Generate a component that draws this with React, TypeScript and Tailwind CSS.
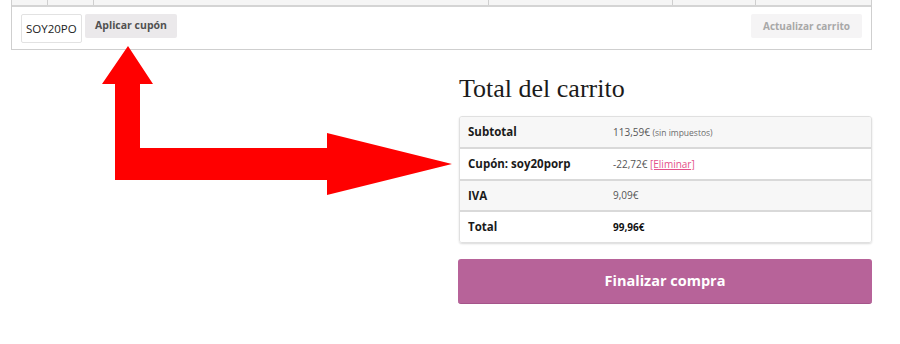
const cols = [36, 46, 395, 184, 83];

type Row = {
    label: string,
    value: React.ReactNode,
    gray: boolean,
    h: string,
}

const rows: Row[] = [
    {
        label: "Subtotal",
        value: (
            <>
                <span>113,59€</span>{" "}
                <span className="text-[8.5px] text-[#6d6d6d]">(sin impuestos)</span>
            </>
        ),
        gray: true,
        h: "h-[32px]",
    },
    {
        label: "Cupón: soy20porp",
        value: (
            <>
                <span>-22,72€</span>{" "}
                <span className="text-[#e4508a] underline">[Eliminar]</span>
            </>
        ),
        gray: false,
        h: "h-[32px]",
    },
    { label: "IVA", value: <span>9,09€</span>, gray: true, h: "h-[31px]" },
    {
        label: "Total",
        value: <span className="font-bold text-[#111]">99,96€</span>,
        gray: false,
        h: "h-[30px]",
    },
];

const Arrow = () => (
    <svg className="absolute left-0 top-0 pointer-events-none" width="900" height="344" viewBox="0 0 900 344">
        <polygon
            fill="#ff0000"
            points="128,46 153,84 140,84 140,148 327,148 327,133 452,164 327,195 327,180 115,180 115,84 102,84"
        />
    </svg>
);

const App = () => {
    return (
        <div className="relative w-[900px] h-[344px] bg-white overflow-hidden font-['Open_Sans',sans-serif]">
            {/* cart table bottom */}
            <div className="ml-[11px] w-[861px] border-x border-b border-[#cfcfcf]">
                <div className="flex h-[7px] bg-[#f5f5f5] border-b-2 border-[#d4d4d4]">
                    {cols.map((w, i) => (
                        <div key={i} style={{ width: w }} className="border-r border-[#cfcfcf] shrink-0" />
                    ))}
                    <div className="flex-1" />
                </div>
                <div className="flex items-start justify-between h-[42px] pl-[9px] pr-[9px] pt-[7px]">
                    <div className="flex items-start gap-[3px]">
                        <div className="w-[61px] h-[29px] border border-[#e2e2e2] rounded-[2px] flex items-center pl-[4px] text-[11.5px] text-[#222]">
                            SOY20PO
                        </div>
                        <button type="button" className="h-[24px] w-[92px] bg-[#ebe9eb] rounded-[2px] text-[10.5px] font-bold text-[#515151]">
                            Aplicar cupón
                        </button>
                    </div>
                    <button type="button" className="h-[24px] w-[111px] bg-[#f5f4f5] rounded-[2px] text-[10px] font-bold text-[#a8a8a8]">
                        Actualizar carrito
                    </button>
                </div>
            </div>

            {/* totals */}
            <div className="ml-[459px] w-[413px]">
                <h2 className="mt-[22px] h-[44px] text-[26px] leading-[34px] text-[#1b1b1b] font-['Liberation_Serif',serif]">
                    Total del carrito
                </h2>
                <div className="rounded-[3px] border border-[#e0e0e0] shadow-[0_1px_2px_rgba(0,0,0,0.15)] overflow-hidden">
                    {rows.map((r, i) => (
                        <div
                            key={r.label}
                            className={`flex items-center ${r.h} ${r.gray ? "bg-[#f7f7f7]" : "bg-white"} ${i < rows.length - 1 ? "border-b-2 border-[#d9d9d9]" : ""}`}
                        >
                            <div className="w-[153px] pl-[8px] text-[11.5px] font-bold text-[#1a1a1a]">{r.label}</div>
                            <div className="text-[10px] text-[#555]">{r.value}</div>
                        </div>
                    ))}
                </div>
                <button type="button" className="mt-[16px] w-[414px] -ml-px h-[45px] bg-[#b76399] border-b border-[#a4548a] rounded-[3px] text-white text-[14.5px] font-bold">
                    Finalizar compra
                </button>
            </div>

            <Arrow />
        </div>
    )
}

export default App;
